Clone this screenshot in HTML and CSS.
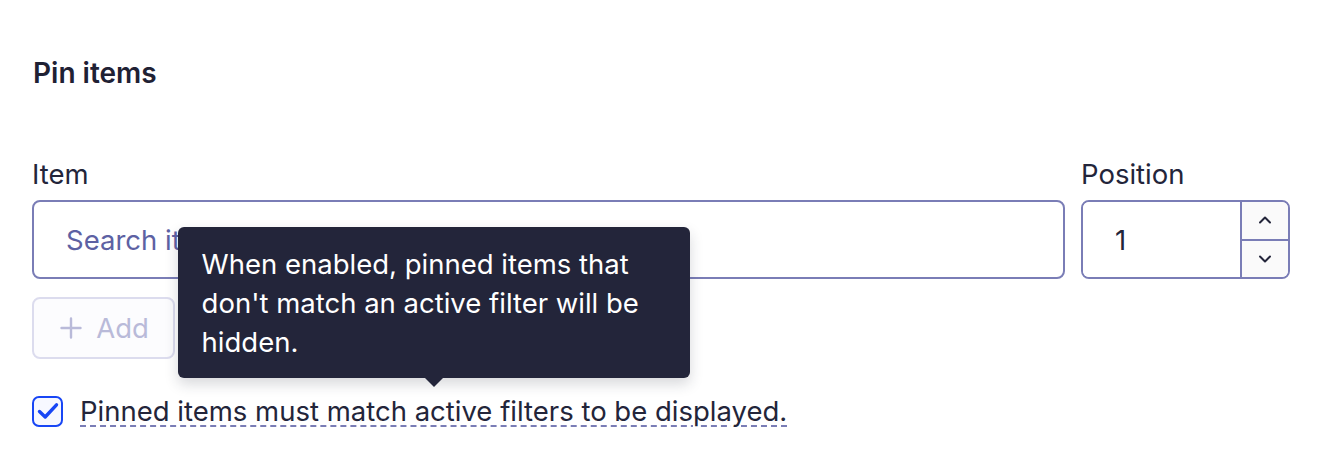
FILE: index.html
```html
<!DOCTYPE html>
<html>
<head>
    <title>Pin items</title>
    <link rel="stylesheet" href="styles.css">
</head>
<body>
    <div class="panel">
        <h2 class="title">Pin items</h2>
        <div class="fields">
            <div class="field">
                <label class="label">Item</label>
                <input class="input" type="text" placeholder="Search items">
            </div>
            <div class="field">
                <label class="label">Position</label>
                <div class="number">
                    <input class="number-input" type="text" value="1">
                    <div class="stepper">
                        <button class="step">
                            <svg width="16" height="10" viewBox="0 0 16 10"><path d="M3 7.5 8 2.5l5 5" fill="none" stroke="#23253a" stroke-width="2" stroke-linecap="round" stroke-linejoin="round"/></svg>
                        </button>
                        <button class="step step-down">
                            <svg width="16" height="10" viewBox="0 0 16 10"><path d="M3 2.5 8 7.5l5-5" fill="none" stroke="#23253a" stroke-width="2" stroke-linecap="round" stroke-linejoin="round"/></svg>
                        </button>
                    </div>
                </div>
            </div>
        </div>
        <button class="btn" disabled>
            <svg width="22" height="22" viewBox="0 0 22 22"><path d="M11 1.5v19M1.5 11h19" stroke="#b9bad9" stroke-width="2.4" stroke-linecap="round"/></svg>
            Add
        </button>
        <div class="check-row">
            <span class="checkbox">
                <svg width="22" height="18" viewBox="0 0 22 18"><path d="M2.5 9.5 8.2 15 19.5 2.8" fill="none" stroke="#1846f5" stroke-width="3.4" stroke-linecap="round" stroke-linejoin="round"/></svg>
            </span>
            <span class="hint">Pinned items must match active filters to be displayed.
                <span class="tooltip">When enabled, pinned items that don't match an active filter will be hidden.</span>
            </span>
        </div>
    </div>
</body>
</html>
```

FILE: styles.css
```css
body {
    margin: 0;
    background: #ffffff;
    font-family: Inter, "Noto Sans", sans-serif;
    color: #23253a;
}
.panel {
    width: 1258px;
    padding: 55px 0 0 32px;
}
.title {
    margin: 0 0 65px 1px;
    font-size: 28px;
    font-weight: 600;
    line-height: 36px;
    color: #1f2134;
}
.fields {
    display: grid;
    grid-template-columns: 1fr 209px;
    gap: 16px;
}
.field { display: flex; flex-direction: column; }
.label {
    font-size: 27.5px;
    line-height: 36px;
    margin-bottom: 8px;
    color: #23253a;
}
.input, .number-input {
    box-sizing: border-box;
    height: 79px;
    border: 2px solid #7a7db6;
    border-radius: 8px;
    padding: 0 32px;
    font: 27.5px Inter, sans-serif;
    color: #23253a;
    outline: none;
}
.input::placeholder { color: #5d61a3; }
.number {
    display: flex;
    height: 79px;
    box-sizing: border-box;
    border: 2px solid #7a7db6;
    border-radius: 8px;
    overflow: hidden;
}
.number-input {
    flex: 1;
    width: 0;
    height: 100%;
    border: 0;
    border-radius: 0;
    padding-left: 32px;
}
.stepper {
    width: 46px;
    display: flex;
    flex-direction: column;
    border-left: 2px solid #7a7db6;
    background: #fafafa;
}
.step {
    flex: 1;
    border: 0;
    padding: 0;
    background: transparent;
    display: flex;
    align-items: center;
    justify-content: center;
}
.step-down { border-top: 2px solid #7a7db6; }
.btn {
    margin-top: 18px;
    height: 62px;
    width: 143px;
    box-sizing: border-box;
    border: 2px solid #dcdcee;
    border-radius: 8px;
    background: #fcfcfe;
    color: #b9bad9;
    font: 27.5px Inter, sans-serif;
    display: flex;
    align-items: center;
    justify-content: center;
    gap: 14px;
    padding: 0 0 0 2px;
}
.check-row {
    margin-top: 34px;
    display: flex;
    align-items: center;
    gap: 17px;
}
.checkbox {
    width: 31px;
    height: 31px;
    box-sizing: border-box;
    border: 2px solid #1846f5;
    border-radius: 7px;
    background: #f7f8ff;
    display: flex;
    align-items: center;
    justify-content: center;
}
.hint {
    position: relative;
    font-size: 27.5px;
    line-height: 36px;
    text-decoration: underline dashed #7a7db6;
    text-decoration-thickness: 2px;
    text-underline-offset: 4px;
    color: #23253a;
}
.tooltip {
    position: absolute;
    bottom: calc(100% + 15px);
    left: 50%;
    transform: translateX(-50%);
    width: 512px;
    box-sizing: border-box;
    padding: 18px 24px 16px;
    background: #23253a;
    color: #ffffff;
    border-radius: 6px;
    font-size: 27.5px;
    line-height: 39px;
    text-decoration: none;
    box-shadow: 0 6px 14px rgba(35, 37, 58, 0.18);
}
.tooltip::after {
    content: "";
    position: absolute;
    top: 100%;
    left: 50%;
    margin-left: -9px;
    border: 9px solid transparent;
    border-top-color: #23253a;
    border-bottom: 0;
}
```
